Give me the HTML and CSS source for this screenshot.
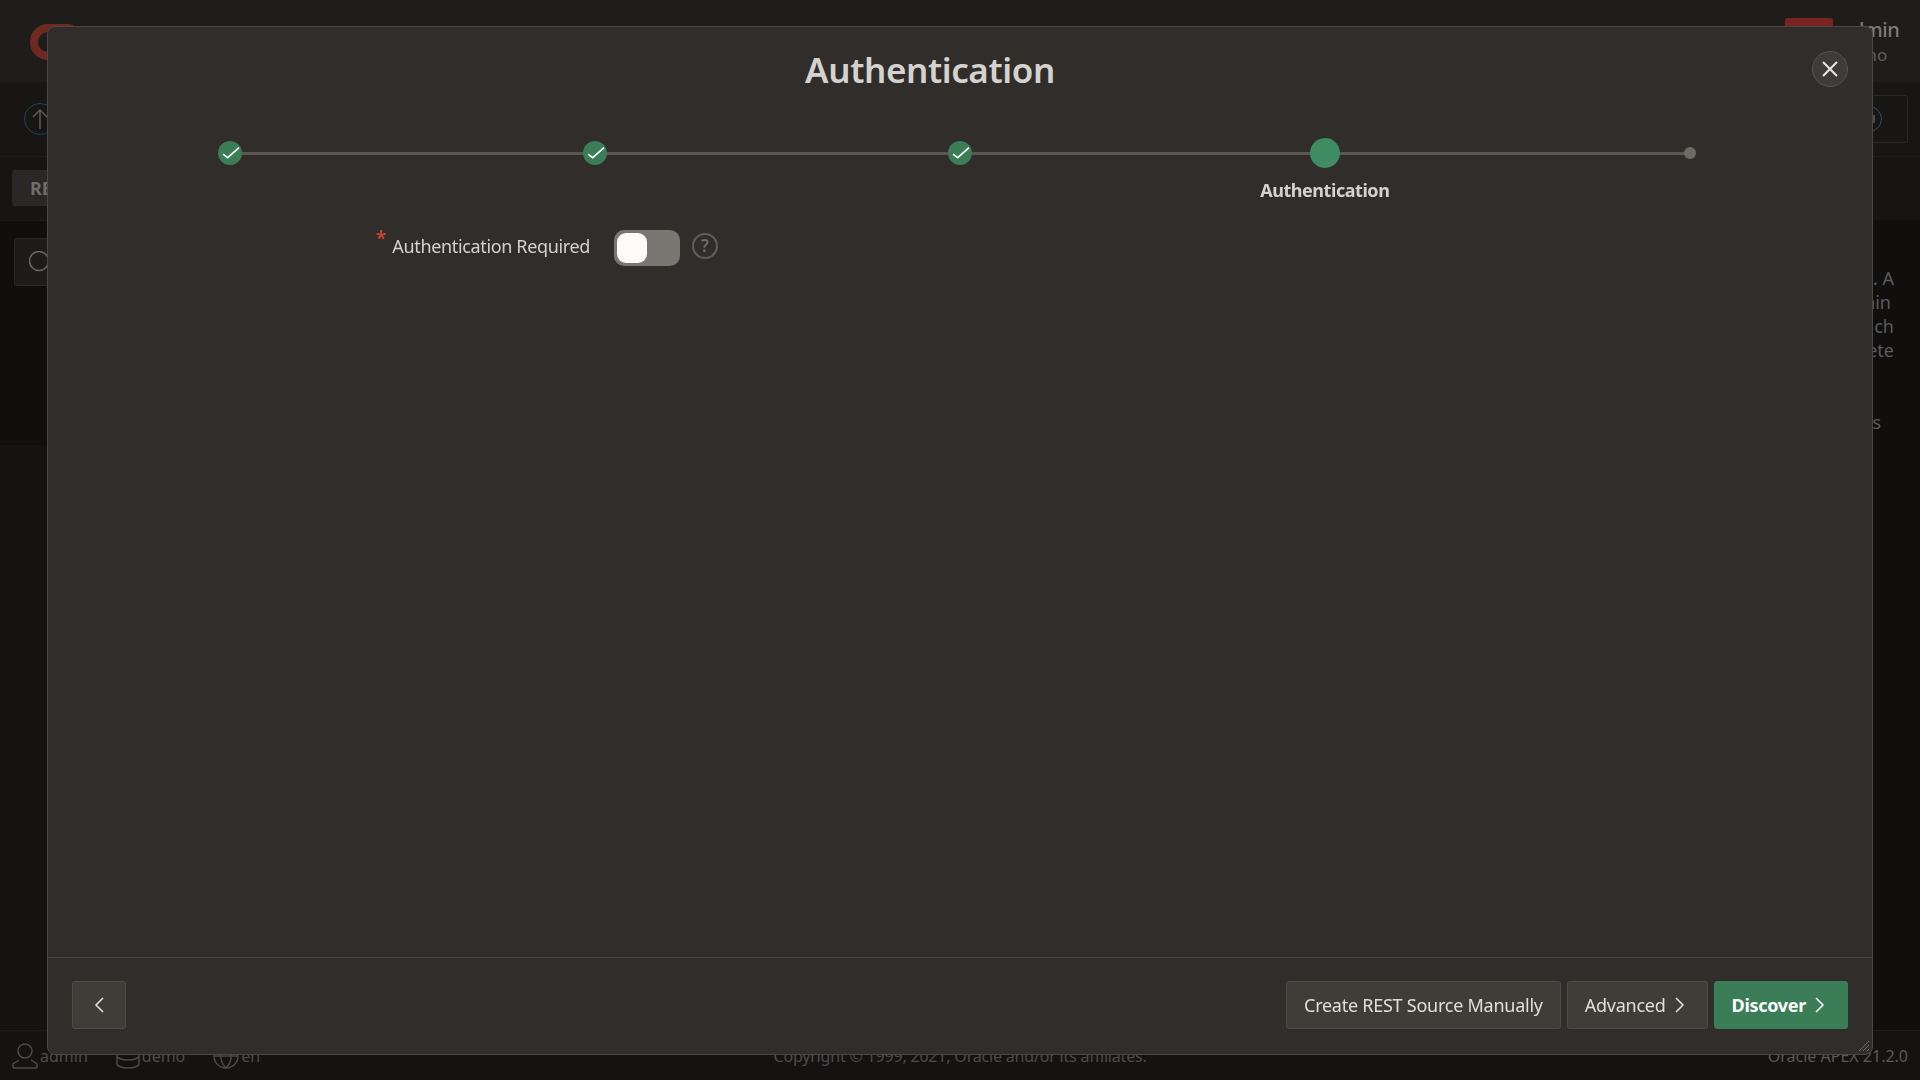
FILE: index.html
```html
<!DOCTYPE html>
<html lang="en">
<head>
<meta charset="utf-8">
<title>Authentication</title>
<link rel="stylesheet" href="styles.css">
</head>
<body>
<div class="page">
  <header class="topbar">
    <div class="logo"></div>
    <div class="top-right">
      <div class="badge"></div>
      <div class="user-block"><div class="user-name">admin</div><div class="user-ws">demo</div></div>
    </div>
  </header>
  <div class="subbar">
    <div class="round-btn"><svg width="32" height="32" viewBox="0 0 32 32"><circle cx="16" cy="16" r="15.5" fill="none" stroke="#1f4453"/><path d="M16 26V7M9 14l7-7 7 7" fill="none" stroke="#5f5c59" stroke-width="1.5"/></svg></div>
    <div class="sub-box"><svg width="26" height="26" viewBox="0 0 26 26"><circle cx="13" cy="13" r="12.5" fill="none" stroke="#2a5464"/><path d="M18 9v8" stroke="#5f5c59" stroke-width="1.5" fill="none"/></svg></div>
  </div>
  <div class="tabs"><div class="tab">RE</div></div>
  <main class="main">
    <aside class="side">
      <div class="search"><svg width="24" height="24" viewBox="0 0 24 24"><circle cx="10" cy="10" r="9.5" fill="none" stroke="#6a6762" stroke-width="1.5"/></svg></div>
    </aside>
    <section class="notes">
      <div class="note n1">. A</div>
      <div class="note n2">ain</div>
      <div class="note n3">ch</div>
      <div class="note n4">ete</div>
      <div class="note n5">s</div>
    </section>
  </main>
  <footer class="foot">
    <div class="foot-left">
      <span class="foot-item"><svg width="26" height="26" viewBox="0 0 26 26"><circle cx="13" cy="8" r="7" fill="none" stroke="#4c4a47" stroke-width="1.5"/><path d="M1 25v-4l6-4M25 25v-4l-6-4M1 25h24" fill="none" stroke="#4c4a47" stroke-width="1.5"/></svg>admin</span>
      <span class="foot-item"><svg width="24" height="26" viewBox="0 0 24 26"><ellipse cx="12" cy="5" rx="11" ry="4" fill="none" stroke="#4c4a47" stroke-width="1.5"/><path d="M1 5v16c0 2 5 4 11 4s11-2 11-4V5M1 13c0 2 5 4 11 4s11-2 11-4" fill="none" stroke="#4c4a47" stroke-width="1.5"/></svg>demo</span>
      <span class="foot-item"><svg width="26" height="26" viewBox="0 0 26 26"><circle cx="13" cy="13" r="12" fill="none" stroke="#4c4a47" stroke-width="1.5"/><path d="M1 13h24M13 1c-7 7-7 17 0 24M13 1c7 7 7 17 0 24" fill="none" stroke="#4c4a47" stroke-width="1.5"/></svg>en</span>
    </div>
    <div class="foot-copy">Copyright © 1999, 2021, Oracle and/or its affiliates.</div>
    <div class="foot-version">Oracle APEX 21.2.0</div>
  </footer>
</div>

<div class="dialog" role="dialog">
  <div class="dlg-head">
    <h1 class="dlg-title">Authentication</h1>
    <button class="close" aria-label="Close"><svg width="16" height="16" viewBox="0 0 16 16"><path d="M1 1l14 14M15 1L1 15" stroke="#e8e6e3" stroke-width="2" fill="none"/></svg></button>
  </div>
  <ol class="steps">
    <li class="step done"><span class="dot"><svg width="24" height="24" viewBox="0 0 24 24"><path d="M5 13.2l4.7 3.5L21 6.7" fill="none" stroke="#fff" stroke-width="1.6"/></svg></span></li>
    <li class="step done"><span class="dot"><svg width="24" height="24" viewBox="0 0 24 24"><path d="M5 13.2l4.7 3.5L21 6.7" fill="none" stroke="#fff" stroke-width="1.6"/></svg></span></li>
    <li class="step done"><span class="dot"><svg width="24" height="24" viewBox="0 0 24 24"><path d="M5 13.2l4.7 3.5L21 6.7" fill="none" stroke="#fff" stroke-width="1.6"/></svg></span></li>
    <li class="step current"><span class="dot"></span><span class="step-label">Authentication</span></li>
    <li class="step todo"><span class="dot"></span></li>
  </ol>
  <div class="dlg-body">
    <div class="field">
      <label class="field-label"><span class="req">*</span>Authentication Required</label>
      <span class="toggle"><span class="knob"></span></span>
      <span class="help">?</span>
    </div>
  </div>
  <div class="dlg-foot">
    <button class="btn btn-back"><svg width="10" height="16" viewBox="0 0 10 16"><path d="M9 1L2 8l7 7" fill="none" stroke="#e8e6e3" stroke-width="1.5"/></svg></button>
    <div class="foot-actions">
      <button class="btn">Create REST Source Manually</button>
      <button class="btn btn-chevron">Advanced<svg width="10" height="16" viewBox="0 0 10 16"><path d="M1 1l7 7-7 7" fill="none" stroke="#e8e6e3" stroke-width="1.5"/></svg></button>
      <button class="btn btn-chevron btn-hot">Discover<svg width="10" height="16" viewBox="0 0 10 16"><path d="M1 1l7 7-7 7" fill="none" stroke="#fff" stroke-width="1.5"/></svg></button>
    </div>
    <svg class="grip" width="12" height="12" viewBox="0 0 12 12"><path d="M1 11L11 1M5 11l6-6M9 11l2-2" stroke="#6d6964" stroke-width="1" fill="none"/></svg>
  </div>
</div>
</body>
</html>
```

FILE: styles.css
```css
* { box-sizing: border-box; }
html, body { margin: 0; height: 100%; overflow: hidden; }
body { background: #141312; font-family: "Noto Sans", "Open Sans", sans-serif; color: #5a5a5c; }

.page { width: 1920px; height: 1080px; display: flex; flex-direction: column; }

.topbar { height: 82px; background: #1e1d1c; display: flex; justify-content: space-between; padding: 18px 27px 0 30px; flex: none; }
.logo { width: 54px; height: 36px; margin-top: 6px; border: 8px solid #6e2a20; border-radius: 18px; }
.top-right { display: flex; gap: 8px; }
.badge { width: 48px; height: 36px; background: #7a2320; border-radius: 3px; }
.user-block { text-align: left; margin-top: -1px; width: 52px; }
.user-name { font-size: 20px; line-height: 26px; color: #7d7b78; font-weight: 500; letter-spacing: -0.5px; }
.user-ws { font-size: 17px; line-height: 24px; color: #5f5d5a; }

.subbar { height: 75px; background: #171615; border-bottom: 1px solid #1f1e1d; display: flex; justify-content: space-between; align-items: center; padding: 0 12px 0 24px; flex: none; }
.round-btn { height: 32px; }
.sub-box { width: 60px; height: 48px; border: 1px solid #2a2927; border-radius: 3px; display: flex; align-items: center; padding-left: 7px; }

.tabs { height: 63px; background: #161514; padding: 13px 0 0 12px; flex: none; }
.tab { width: 80px; height: 36px; background: #292826; border-radius: 3px; font-weight: 700; font-size: 18px; line-height: 36px; padding-left: 18px; color: #6e6d6c; }

.main { flex: 1; display: flex; justify-content: space-between; min-height: 0; }
.side { width: 260px; height: 225px; background: #100f0e; padding: 17px 0 0 14px; border-top: 1px solid #1d1c1b; }
.search { width: 200px; height: 48px; background: #1d1c1b; border: 1px solid #292826; border-radius: 3px; padding: 12px 0 0 14px; }
.notes { padding-top: 46px; font-size: 18px; line-height: 24px; color: #5a5c60; text-align: right; width: 200px; background: #100f0e; }
.note.n1 { margin-right: 26px; }
.note.n2 { margin-right: 29px; }
.note.n3 { margin-right: 26px; }
.note.n4 { margin-right: 26px; }
.note.n5 { margin-right: 39px; margin-top: 48px; }

.foot { height: 50px; flex: none; background: #141312; border-top: 1px solid #1d1c1b; display: flex; align-items: center; padding: 0 12px; font-size: 16px; color: #4d4c4c; }
.foot-left { display: flex; gap: 28px; flex: 1; }
.foot-item { display: flex; align-items: center; gap: 2px; }
.foot-copy { flex: none; letter-spacing: -0.19px; }
.foot-version { flex: 1; text-align: right; font-size: 16px; color: #5a5a5a; }

.dialog { position: fixed; left: 47px; top: 26px; width: 1826px; height: 1029px; background: #312d2a; border: 1px solid #4a4744; border-radius: 8px; display: flex; flex-direction: column; color: #d4d2cf; }

.dlg-head { display: flex; align-items: center; height: 60px; margin-top: 12px; padding-right: 24px; flex: none; }
.dlg-title { flex: 1; margin: 2px 0 0; text-align: center; font-size: 35px; font-weight: 600; line-height: 48px; letter-spacing: -0.4px; color: #d4d2cf; }
.close { width: 36px; height: 36px; border-radius: 50%; background: #3f3b38; border: 1.5px solid #57534f; padding: 0; display: flex; align-items: center; justify-content: center; }

.steps { list-style: none; margin: 37px 0 0; padding: 0; display: grid; grid-template-columns: repeat(5, 1fr); height: 94px; flex: none; }
.step { position: relative; display: flex; flex-direction: column; align-items: center; }
.step::before { content: ""; position: absolute; top: 16px; left: 50%; width: 100%; height: 3px; background: #5b5750; }
.step:last-child::before { display: none; }
.dot { position: relative; border-radius: 50%; display: block; flex: none; }
.done .dot { width: 24px; height: 24px; background: #3a7d57; margin-top: 5px; }
.done .dot svg { display: block; }
.current .dot { width: 30px; height: 30px; background: #3f8c62; margin-top: 2px; }
.todo .dot { width: 12px; height: 12px; background: #6f6a65; margin-top: 11px; }
.step-label { font-size: 18px; font-weight: 700; line-height: 24px; margin-top: 10px; letter-spacing: -0.45px; color: #d4d2cf; }

.dlg-body { flex: 1; min-height: 0; }
.field { display: flex; align-items: center; height: 36px; }
.field-label { width: 542px; text-align: right; font-size: 18px; line-height: 24px; letter-spacing: -0.35px; color: #d4d2cf; margin-top: -4px; }
.req { color: #c74634; font-size: 20px; line-height: 0; vertical-align: 8px; margin-right: 6px; font-weight: 600; }
.toggle { width: 66px; height: 36px; border-radius: 10px; background: #7a7671; margin-left: 24px; padding: 3px; display: block; }
.knob { width: 30px; height: 30px; border-radius: 9px; background: #fcfbf9; display: block; }
.help { width: 26px; height: 26px; border-radius: 50%; border: 2px solid #625e59; color: #6f6b66; margin-left: 12px; font-size: 17px; font-weight: 600; line-height: 22px; text-align: center; margin-top: -4px; }

.dlg-foot { height: 97px; flex: none; border-top: 1px solid #45413d; display: flex; align-items: center; justify-content: space-between; padding: 0 24px 2px; position: relative; }
.foot-actions { display: flex; gap: 6px; }
.btn { height: 48px; background: #403c38; border: 1.5px solid #504c47; border-radius: 3px; color: #e0dedb; font-family: inherit; font-size: 18px; letter-spacing: -0.25px; padding: 0 17px; display: flex; align-items: center; gap: 9px; }
.btn-chevron { padding: 0 22px 0 17px; }
.btn-back { width: 54px; justify-content: center; padding: 0; }
.btn-hot { background: #3a7d57; border-color: #3a7d57; color: #fff; font-weight: 700; letter-spacing: -0.3px; }
.grip { position: absolute; right: 2px; bottom: 2px; }
```
